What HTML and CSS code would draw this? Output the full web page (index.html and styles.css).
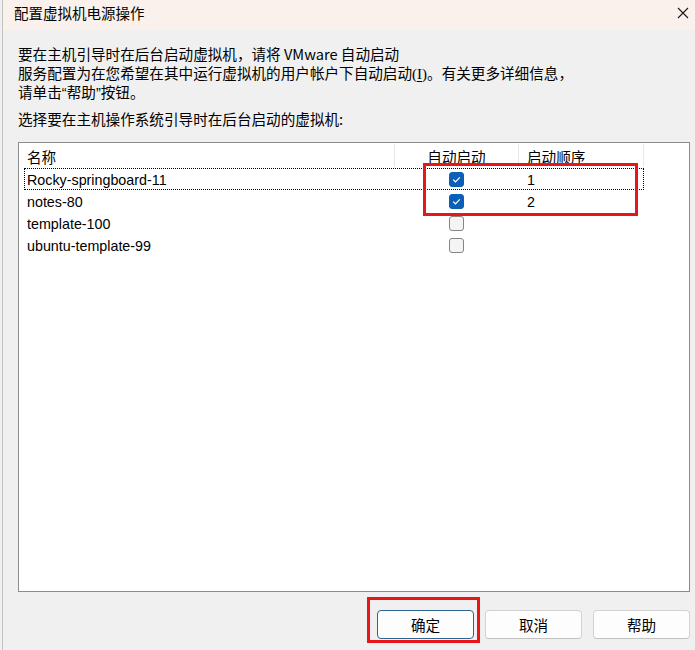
FILE: index.html
```html
<!DOCTYPE html>
<html lang="zh-CN">
<head>
<meta charset="utf-8">
<title>配置虚拟机电源操作</title>
<link rel="stylesheet" href="styles.css">
</head>
<body>
<div class="window">
  <div class="titlebar">
    <span class="title">配置虚拟机电源操作</span>
    <svg class="close" width="12" height="12" viewBox="0 0 12 12"><path d="M1 1 L11 11 M11 1 L1 11" stroke="#1a1a1a" stroke-width="1.1" fill="none"/></svg>
  </div>
  <div class="content">
    <p class="desc">要在主机引导时在后台启动虚拟机，请将 VMware 自动启动<br>服务配置为在您希望在其中运行虚拟机的用户帐户下自动启动<span class="acc">(<u>I</u>)</span>。有关更多详细信息，<br>请单击<span class="q">“</span>帮助<span class="q">”</span>按钮。</p>
    <p class="prompt">选择要在主机操作系统引导时在后台启动的虚拟机:</p>
    <div class="listbox">
      <div class="row header">
        <div class="cell name">名称</div>
        <div class="cell auto">自动启动</div>
        <div class="cell order">启动顺序</div>
      </div>
      <div class="row focused">
        <div class="cell name">Rocky-springboard-11</div>
        <div class="cell auto"><span class="check on"><svg width="15" height="15" viewBox="0 0 15 15"><path d="M4.2 7.6 L6.5 9.8 L10.8 5.3" stroke="#fff" stroke-width="1.2" fill="none"/></svg></span></div>
        <div class="cell order">1</div>
      </div>
      <div class="row">
        <div class="cell name">notes-80</div>
        <div class="cell auto"><span class="check on"><svg width="15" height="15" viewBox="0 0 15 15"><path d="M4.2 7.6 L6.5 9.8 L10.8 5.3" stroke="#fff" stroke-width="1.2" fill="none"/></svg></span></div>
        <div class="cell order">2</div>
      </div>
      <div class="row">
        <div class="cell name">template-100</div>
        <div class="cell auto"><span class="check"></span></div>
        <div class="cell order"></div>
      </div>
      <div class="row">
        <div class="cell name">ubuntu-template-99</div>
        <div class="cell auto"><span class="check"></span></div>
        <div class="cell order"></div>
      </div>
      <div class="mark mark-list"></div>
    </div>
    <div class="buttons">
      <div class="btn-wrap">
        <button class="btn primary">确定</button>
        <div class="mark mark-ok"></div>
      </div>
      <button class="btn">取消</button>
      <button class="btn">帮助</button>
    </div>
  </div>
</div>
</body>
</html>
```
FILE: styles.css
```css
html, body {
  margin: 0;
  padding: 0;
  background: #f0f0f0;
}
body {
  font-family: "Noto Sans CJK SC", sans-serif;
  font-size: 14.6px;
  color: #000;
  width: 695px;
  height: 650px;
  overflow: hidden;
}
.window {
  margin-left: 2px;
  border-left: 1px solid #c2c2c2;
  height: 650px;
  background: #f0f0f0;
}
.titlebar {
  height: 30px;
  background: #faf1ec;
  display: flex;
  align-items: center;
  justify-content: space-between;
  padding: 0 6px 0 11px;
}
.title {
  font-size: 14.5px;
  line-height: 20px;
  margin-top: -4px;
}
.close {
  margin-top: -4px;
}
.content {
  padding: 14px 0 0 15px;
}
.desc {
  margin: 0;
  line-height: 19px;
}
.acc {
  font-family: "Liberation Serif", serif;
  font-size: 15px;
  line-height: 1;
}
.desc u {
  text-underline-offset: 2px;
}
.q {
  font-family: "Liberation Sans", sans-serif;
  line-height: 1;
}
.prompt {
  margin: 8px 0 0 0;
  line-height: 19px;
}
.listbox {
  position: relative;
  margin-top: 14px;
  width: 672px;
  height: 450px;
  background: #fff;
  border: 1px solid #8c8c8c;
  box-sizing: border-box;
  padding: 0 0 0 5px;
}
.row {
  display: grid;
  grid-template-columns: 371px 124px 125px;
  width: 620px;
  height: 22px;
  align-items: center;
  box-sizing: border-box;
}
.row .cell {
  line-height: 22px;
  position: relative;
}
.header {
  height: 25px;
}
.header .cell {
  height: 23px;
  line-height: 26px;
  border-right: 1px solid #e8e8e8;
  align-self: start;
  margin-top: 1px;
}
.header .name {
  padding-left: 2px;
}
.header.row .auto {
  display: block;
  text-align: center;
}
.header .order {
  padding-left: 9px;
}
.cell {
  white-space: nowrap;
  box-sizing: border-box;
}
.row .name,
.row .order {
  font-family: "Liberation Sans", sans-serif;
  font-size: 14.3px;
  top: 1px;
}
.row .name {
  padding-left: 3px;
}
.header.row .name,
.header.row .order {
  font-family: "Noto Sans CJK SC", sans-serif;
  font-size: 14.6px;
  top: 0;
}
.row .auto {
  display: flex;
  justify-content: center;
}
.row .order {
  padding-left: 8px;
}
.focused {
  outline: 1px dotted #000;
  outline-offset: -1px;
}
.check {
  display: block;
  width: 15px;
  height: 15px;
  box-sizing: border-box;
  border: 1px solid #858585;
  border-radius: 3px;
  background: #f4f4f4;
  margin-left: -2px;
}
.check.on {
  background: #0b5fb6;
  border-color: #0b5fb6;
}
.check svg {
  display: block;
  margin: -1px;
}
.mark {
  position: absolute;
  border: 3px solid #e8161b;
  box-sizing: border-box;
}
.mark-list {
  left: 404px;
  top: 20px;
  width: 215px;
  height: 53px;
}
.buttons {
  display: flex;
  justify-content: flex-end;
  gap: 11px;
  width: 672px;
  margin-top: 18px;
}
.btn-wrap {
  position: relative;
}
.btn {
  width: 97px;
  height: 29px;
  font-family: "Noto Sans CJK SC", sans-serif;
  font-size: 14.6px;
  color: #000;
  background: #fdfdfd;
  border: 1px solid #d3d3d3;
  border-bottom-color: #c2c2c2;
  border-radius: 4px;
  padding: 0;
  display: block;
}
.btn.primary {
  border: 1px solid #2a6594;
}
.mark-ok {
  left: -10px;
  top: -13px;
  right: -6px;
  bottom: -4px;
}
```
